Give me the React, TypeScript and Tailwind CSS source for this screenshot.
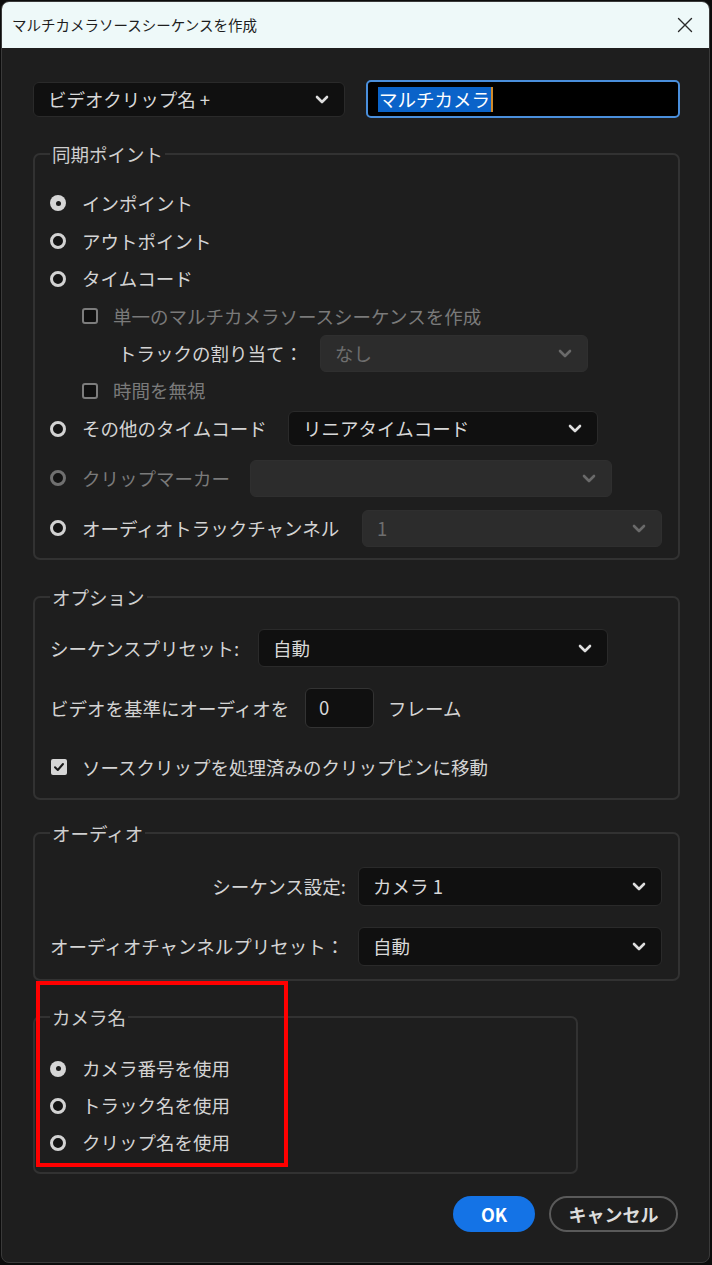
import type { ReactNode } from 'react';

const FONT = "font-['Noto_Sans_CJK_JP','Noto_Sans',sans-serif]";

function Chevron({ disabled = false }: { disabled?: boolean }) {
  return (
    <svg width="14" height="9" viewBox="0 0 14 9" className="shrink-0">
      <path
        d="M2 2 L7 7 L12 2"
        fill="none"
        stroke={disabled ? '#6a6a6a' : '#dedede'}
        strokeWidth="2.6"
        strokeLinecap="round"
        strokeLinejoin="round"
      />
    </svg>
  );
}

function Select({
  value,
  width,
  height = 'h-[36px]',
  disabled = false,
}: {
  value: string;
  width: string;
  height?: string;
  disabled?: boolean;
}) {
  return (
    <div
      className={`${width} ${height} flex items-center justify-between rounded-[6px] border pl-[14px] pr-[15px] ${
        disabled ? 'bg-[#2c2c2c] border-[#2f2f2f] text-[#6e6e6e]' : 'bg-[#101010] border-[#2a2a2a] text-[#d8d8d8]'
      }`}
    >
      <span className="text-[18.5px] leading-none whitespace-pre">{value}</span>
      <Chevron disabled={disabled} />
    </div>
  );
}

function Radio({ checked = false, disabled = false }: { checked?: boolean; disabled?: boolean }) {
  if (checked) {
    return (
      <span className="w-[16px] h-[16px] rounded-full bg-[#d6d6d6] flex items-center justify-center shrink-0">
        <span className="w-[5px] h-[5px] rounded-full bg-[#1c1c1c]" />
      </span>
    );
  }
  return (
    <span
      className={`w-[16px] h-[16px] rounded-full border-[3px] bg-[#141414] shrink-0 ${
        disabled ? 'border-[#707070]' : 'border-[#d2d2d2]'
      }`}
    />
  );
}

function Checkbox({ checked = false }: { checked?: boolean }) {
  if (checked) {
    return (
      <span className="w-[16px] h-[16px] rounded-[2px] bg-[#d6d6d6] flex items-center justify-center shrink-0">
        <svg width="12" height="12" viewBox="0 0 12 12">
          <path d="M2 6.2 L4.8 9 L10 3" fill="none" stroke="#1a1a1a" strokeWidth="2" strokeLinecap="round" strokeLinejoin="round" />
        </svg>
      </span>
    );
  }
  return <span className="w-[16px] h-[16px] rounded-[3px] border-[2.5px] border-[#7c7c7c] bg-[#101010] shrink-0" />;
}

function Group({
  title,
  width,
  className = '',
  children,
}: {
  title: string;
  width: string;
  className?: string;
  children: ReactNode;
}) {
  return (
    <fieldset className={`${width} border-2 border-[#323232] rounded-[7px] ${className}`}>
      <legend className="px-[2px] text-[18.5px] leading-[24px] text-[#cfcfcf]">{title}</legend>
      {children}
    </fieldset>
  );
}

function RadioRow({
  label,
  checked,
  disabled,
  h = 'h-[37px]',
  children,
  labelWidth,
}: {
  label: string;
  checked?: boolean;
  disabled?: boolean;
  h?: string;
  children?: ReactNode;
  labelWidth?: string;
}) {
  return (
    <div className={`${h} flex items-center`}>
      <Radio checked={checked} disabled={disabled} />
      <span
        className={`ml-[16px] text-[18.5px] leading-none ${labelWidth ?? ''} ${
          disabled ? 'text-[#7a7a7a]' : 'text-[#d4d4d4]'
        }`}
      >
        {label}
      </span>
      {children}
    </div>
  );
}

export default function App() {
  return (
    <div className={`w-[712px] h-[1265px] bg-[#0c0c0c] pt-[1px] pl-[1px] ${FONT}`}>
      <div className="w-[709px] h-[1262px] rounded-[8px] border border-[#3a3a3a] bg-[#1e1e1e] overflow-hidden relative">
        {/* title bar */}
        <div className="h-[46px] bg-[#eef9f9] flex items-center justify-between pl-[10px] pr-[16px]">
          <span className="text-[14.5px] text-[#1e1e1e] leading-none">マルチカメラソースシーケンスを作成</span>
          <svg width="16" height="16" viewBox="0 0 16 16">
            <path d="M1.5 1.5 L14.5 14.5 M14.5 1.5 L1.5 14.5" stroke="#2a2a2a" strokeWidth="1.4" strokeLinecap="round" />
          </svg>
        </div>

        <div className="pl-[31px] flex flex-col">
          {/* top row */}
          <div className="mt-[32px] h-[38px] flex items-center">
            <Select value="ビデオクリップ名 +" width="w-[312px]" height="h-[35px]" />
            <div className="ml-[21px] w-[314px] h-[38px] rounded-[5px] border-2 border-[#4a8fdc] bg-black flex items-center pl-[10px]">
              <span className="bg-[#0a63c9] text-white text-[18.5px] leading-[25px] px-[1px]">マルチカメラ</span>
              <span className="w-[2px] h-[25px] bg-[#d08a2a]" />
            </div>
          </div>

          {/* 同期ポイント */}
          <Group title="同期ポイント" width="w-[647px]" className="mt-[24px] pl-[15px] pt-[18px] pb-[11px]">
            <RadioRow label="インポイント" checked h="h-[38px]" />
            <RadioRow label="アウトポイント" h="h-[38px]" />
            <RadioRow label="タイムコード" h="h-[37px]" />
            <div className="h-[38px] flex items-center pl-[32px]">
              <Checkbox />
              <span className="ml-[15px] text-[18.5px] leading-none text-[#7a7a7a]">単一のマルチカメラソースシーケンスを作成</span>
            </div>
            <div className="h-[37px] flex items-center pl-[68px]">
              <span className="w-[202px] text-[18.5px] leading-none text-[#d4d4d4]">トラックの割り当て：</span>
              <Select value="なし" width="w-[268px]" height="h-[37px]" disabled />
            </div>
            <div className="h-[37px] flex items-center pl-[32px]">
              <Checkbox />
              <span className="ml-[15px] text-[18.5px] leading-none text-[#7a7a7a]">時間を無視</span>
            </div>
            <RadioRow label="その他のタイムコード" h="h-[39px]" labelWidth="w-[206px]">
              <Select value="リニアタイムコード" width="w-[310px]" height="h-[35px]" />
            </RadioRow>
            <div className="mt-[11px]">
              <RadioRow label="クリップマーカー" disabled h="h-[38px]" labelWidth="w-[168px]">
                <Select value="" width="w-[362px]" height="h-[37px]" disabled />
              </RadioRow>
            </div>
            <div className="mt-[12px]">
              <RadioRow label="オーディオトラックチャンネル" h="h-[38px]" labelWidth="w-[280px]">
                <Select value="1" width="w-[300px]" height="h-[37px]" disabled />
              </RadioRow>
            </div>
          </Group>

          {/* オプション */}
          <Group title="オプション" width="w-[647px]" className="mt-[25px] pl-[15px] pt-[20px] pb-[12px]">
            <div className="h-[38px] flex items-center">
              <span className="w-[208px] text-[18.5px] leading-none text-[#d4d4d4]">シーケンスプリセット:</span>
              <Select value="自動" width="w-[350px]" height="h-[38px]" />
            </div>
            <div className="mt-[21px] h-[40px] flex items-center">
              <span className="w-[255px] text-[18.5px] leading-none text-[#d4d4d4]">ビデオを基準にオーディオを</span>
              <div className="w-[69px] h-[40px] rounded-[6px] border border-[#333] bg-[#101010] flex items-center pl-[13px] text-[18.5px] text-[#d8d8d8]">
                0
              </div>
              <span className="ml-[14px] text-[18.5px] leading-none text-[#d4d4d4]">フレーム</span>
            </div>
            <div className="mt-[20px] h-[38px] flex items-center pl-[1px]">
              <Checkbox checked />
              <span className="ml-[15px] text-[18.5px] leading-none text-[#d4d4d4]">ソースクリップを処理済みのクリップビンに移動</span>
            </div>
          </Group>

          {/* オーディオ */}
          <Group title="オーディオ" width="w-[647px]" className="mt-[21px] pl-[15px] pt-[22px] pb-[13px]">
            <div className="h-[39px] flex items-center">
              <span className="w-[296px] text-right text-[18.5px] leading-none text-[#d4d4d4]">シーケンス設定:</span>
              <span className="w-[12px]" />
              <Select value="カメラ 1" width="w-[304px]" height="h-[39px]" />
            </div>
            <div className="mt-[21px] h-[39px] flex items-center">
              <span className="w-[296px] text-[18.5px] leading-none text-[#d4d4d4] whitespace-nowrap">オーディオチャンネルプリセット：</span>
              <span className="w-[12px]" />
              <Select value="自動" width="w-[304px]" height="h-[39px]" />
            </div>
          </Group>

          {/* カメラ名 */}
          <Group title="カメラ名" width="w-[545px]" className="mt-[24px] pl-[15px] pt-[21px] pb-[11px]">
            <RadioRow label="カメラ番号を使用" checked />
            <RadioRow label="トラック名を使用" />
            <RadioRow label="クリップ名を使用" />
          </Group>

          {/* buttons */}
          <div className="mt-[22px] flex justify-end gap-[14px] pr-[31px]">
            <button className="w-[82px] h-[36px] rounded-full bg-[#1473e6] text-white font-bold text-[18px] leading-none">
              OK
            </button>
            <button className="w-[129px] h-[36px] rounded-full border-2 border-[#5a5a5a] text-[#dcdcdc] font-bold text-[18px] leading-none">
              キャンセル
            </button>
          </div>
        </div>

        {/* annotation */}
        <div className="absolute left-[34px] top-[979px] w-[252px] h-[186px] border-4 border-[#ff0000] pointer-events-none" />
      </div>
    </div>
  );
}
